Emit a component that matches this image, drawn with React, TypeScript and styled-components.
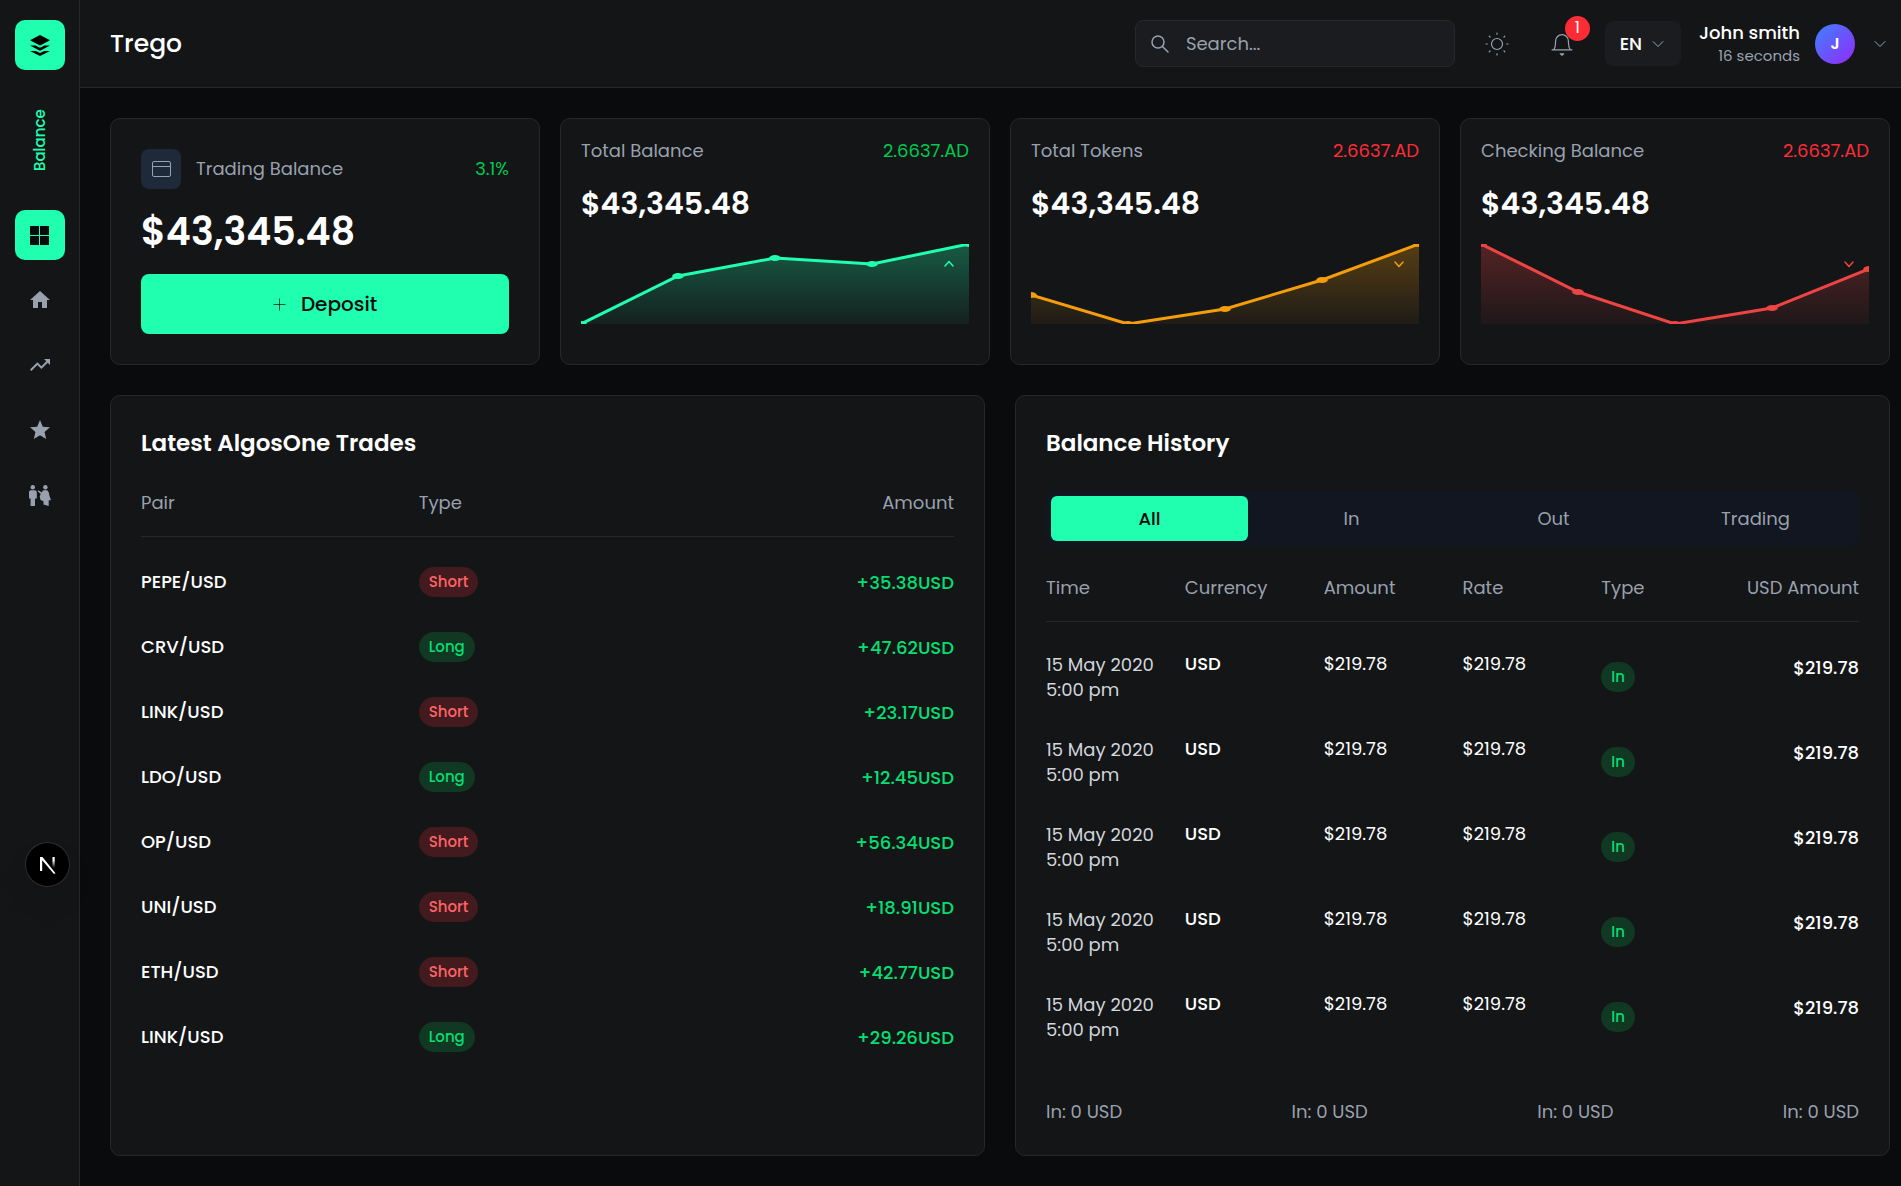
import React, { useId, useState } from "react";
import styled, { createGlobalStyle, css } from "styled-components";
import { MdHome, MdTrendingUp, MdStar } from "react-icons/md";

const GREEN = "#1fffaf";
const MUTED = "#99a1af";
const LINE = "#27282a";
const PANEL = "#141517";

const GlobalStyle = createGlobalStyle`
  *, *::before, *::after { box-sizing: border-box; }
  body {
    margin: 0;
    background: #0a0b0d;
    color: #ffffff;
    font-family: Poppins, Inter, "Noto Sans", sans-serif;
    font-size: 18px;
    line-height: 24px;
  }
  button, input, select { font: inherit; color: inherit; }
  button { border: 0; padding: 0; background: none; cursor: pointer; }
  svg { display: block; flex: none; }
`;

const Shell = styled.div`
  display: grid;
  grid-template-columns: 80px minmax(0, 1fr);
  min-height: 100vh;
`;

const Sidebar = styled.aside`
  display: flex;
  flex-direction: column;
  align-items: center;
  padding-top: 20px;
  background: ${PANEL};
  border-right: 1px solid ${LINE};
`;

const Logo = styled.a`
  display: grid;
  place-items: center;
  width: 50px;
  height: 50px;
  border-radius: 10px;
  background: ${GREEN};
  color: #000000;
`;

const SectionLabel = styled.div`
  height: 140px;
  display: flex;
  align-items: center;
  justify-content: center;
  writing-mode: vertical-rl;
  transform: rotate(180deg);
  color: ${GREEN};
  font-size: 15px;
  font-weight: 500;
`;

const Nav = styled.nav`
  display: grid;
  gap: 15px;
`;

const NavLink = styled.a<{ $active?: boolean }>`
  display: grid;
  place-items: center;
  width: 50px;
  height: 50px;
  border-radius: 10px;
  color: ${(p) => (p.$active ? "#0a0b0d" : MUTED)};
  background: ${(p) => (p.$active ? GREEN : "transparent")};
`;

const DevBadge = styled.button`
  position: fixed;
  left: 26px;
  bottom: 300px;
  display: grid;
  place-items: center;
  width: 43px;
  height: 43px;
  border-radius: 50%;
  background: #000000;
  box-shadow: 0 0 0 1px #2e2e2e, 0 16px 32px -8px rgba(0, 0, 0, 0.24);
`;

const Page = styled.div`
  display: flex;
  flex-direction: column;
`;

const Topbar = styled.header`
  display: flex;
  align-items: center;
  justify-content: space-between;
  padding: 20px 13px 20px 30px;
  background: ${PANEL};
  border-bottom: 1px solid ${LINE};
`;

const Brand = styled.h1`
  margin: 0;
  font-size: 25px;
  line-height: 35px;
  font-weight: 500;
`;

const Tools = styled.div`
  display: flex;
  align-items: center;
`;

const SearchBox = styled.label`
  display: flex;
  align-items: center;
  gap: 16px;
  width: 320px;
  height: 47px;
  margin-right: 30px;
  padding: 0 14px;
  border: 1px solid ${LINE};
  border-radius: 8px;
  background: #1b1c20;
  color: ${MUTED};
`;

const SearchInput = styled.input`
  flex: 1;
  min-width: 0;
  padding: 0;
  border: 0;
  outline: 0;
  background: none;
  &::placeholder { color: ${MUTED}; opacity: 1; }
`;

const IconButton = styled.button`
  position: relative;
  display: grid;
  place-items: center;
  width: 25px;
  height: 25px;
  margin-right: 40px;
  color: ${MUTED};
`;

const Count = styled.span`
  position: absolute;
  left: 15px;
  top: -15px;
  width: 25px;
  height: 25px;
  border-radius: 50%;
  background: #fb2c36;
  color: #ffffff;
  font-size: 16px;
`;

const LangButton = styled.button`
  display: flex;
  align-items: center;
  justify-content: center;
  gap: 8px;
  width: 76px;
  height: 45px;
  margin: 0 18px 0 -10px;
  border-radius: 8px;
  background: #1b1c20;
  font-weight: 500;
`;

const Account = styled.button`
  display: flex;
  align-items: center;
  gap: 15px;
  text-align: right;
`;

const AccountName = styled.span`
  display: block;
  font-weight: 500;
  line-height: 23px;
`;

const AccountNote = styled.span`
  display: block;
  color: ${MUTED};
  font-size: 15px;
  line-height: 23px;
`;

const Avatar = styled.span`
  display: grid;
  place-items: center;
  width: 40px;
  height: 40px;
  margin-right: 2px;
  border-radius: 50%;
  background: linear-gradient(135deg, #3c83ff, #9528fa);
  font-size: 16px;
  font-weight: 600;
`;

const Main = styled.main`
  flex: 1;
  display: flex;
  flex-direction: column;
  gap: 30px;
  padding: 30px 11px 30px 30px;
`;

const StatGrid = styled.section`
  display: grid;
  grid-template-columns: repeat(4, minmax(0, 1fr));
  gap: 20px;
`;

const PanelGrid = styled.section`
  flex: 1;
  display: grid;
  grid-template-columns: repeat(2, minmax(0, 1fr));
  gap: 30px;
`;

const Card = styled.article<{ $pad: number }>`
  padding: ${(p) => p.$pad}px;
  border: 1px solid ${LINE};
  border-radius: 10px;
  background: ${PANEL};
`;

const CardHead = styled.div`
  display: flex;
  align-items: center;
  justify-content: space-between;
  color: ${MUTED};
`;

const CardLabel = styled.div`
  display: flex;
  align-items: center;
  gap: 15px;
`;

const IconTile = styled.span`
  display: grid;
  place-items: center;
  width: 40px;
  height: 40px;
  border-radius: 8px;
  background: #1e2939;
`;

const Change = styled.span<{ $up: boolean }>`
  color: ${(p) => (p.$up ? "#00c950" : "#fb2c36")};
`;

const Figure = styled.div<{ $large?: boolean }>`
  font-weight: 600;
  ${(p) =>
    p.$large
      ? css`
          font-size: 38px;
          line-height: 45px;
          margin: 20px 0;
        `
      : css`
          font-size: 30px;
          line-height: 41px;
          margin: 20px 0;
        `}
`;

const DepositButton = styled.button`
  display: flex;
  align-items: center;
  justify-content: center;
  gap: 15px;
  width: 100%;
  height: 60px;
  border-radius: 8px;
  background: ${GREEN};
  color: #0a0b0d;
  font-size: 20px;
  font-weight: 500;
`;

const ChartBox = styled.div`
  position: relative;
  height: 80px;
`;

const ChartSvg = styled.svg`
  width: 100%;
  height: 80px;
  overflow: hidden;
`;

const ChartMark = styled.span<{ $color: string }>`
  position: absolute;
  top: 12px;
  right: 12px;
  color: ${(p) => p.$color};
`;

const PanelTitle = styled.h2`
  margin: 0 0 30px;
  font-size: 23px;
  line-height: 35px;
  font-weight: 600;
`;

const Table = styled.table`
  display: block;
`;

const Thead = styled.thead`
  display: block;
  padding-bottom: 21px;
  border-bottom: 1px solid ${LINE};
`;

const Tbody = styled.tbody`
  display: grid;
  gap: 35px;
  padding-top: 30px;
`;

const Row = styled.tr<{ $cols: number }>`
  display: grid;
  grid-template-columns: repeat(${(p) => p.$cols}, minmax(0, 1fr));
  column-gap: 20px;
`;

const Th = styled.th`
  padding: 0;
  color: ${MUTED};
  font-weight: 400;
  text-align: left;
  white-space: nowrap;
  &:last-child { text-align: right; }
`;

const Td = styled.td<{ $light?: boolean }>`
  padding: 0;
  font-weight: ${(p) => (p.$light ? 400 : 500)};
  white-space: nowrap;
`;

const DateCell = styled(Td)`
  color: #d1d5dc;
  font-weight: 400;
  line-height: 25px;
`;

const PillCell = styled(Td)`
  padding-top: 10px;
`;

const PairCell = styled(Td)`
  line-height: 30px;
`;

const AmountCell = styled(Td)<{ $gain?: boolean }>`
  height: 30px;
  line-height: 32px;
  text-align: right;
  color: ${(p) => (p.$gain ? "#05df72" : "#ffffff")};
`;

const TradeRow = styled(Row)`
  height: 30px;
`;

const Pill = styled.span<{ $up: boolean }>`
  display: block;
  width: fit-content;
  height: 30px;
  padding: 0 10px;
  border-radius: 15px;
  font-size: 15px;
  line-height: 30px;
  font-weight: 500;
  color: ${(p) => (p.$up ? "#05df72" : "#ff6467")};
  background: ${(p) => (p.$up ? "#103822" : "#431a1e")};
`;

const Tabs = styled.div`
  display: grid;
  grid-template-columns: repeat(4, minmax(0, 1fr));
  gap: 5px;
  margin-bottom: 30px;
  padding: 5px;
  border-radius: 8px;
  background: #111620;
`;

const Tab = styled.button<{ $active: boolean }>`
  height: 45px;
  border-radius: 6px;
  font-weight: ${(p) => (p.$active ? 500 : 400)};
  color: ${(p) => (p.$active ? "#0a0b0d" : MUTED)};
  background: ${(p) => (p.$active ? GREEN : "transparent")};
`;

const Totals = styled.footer`
  display: flex;
  justify-content: space-between;
  padding: 58px 0 1px;
  color: ${MUTED};
`;

type ChevronProps = { up?: boolean; size?: number; width?: number; color?: string };

const Chevron = ({ up, size = 16, width = 1, color = "currentColor" }: ChevronProps) => (
  <svg width={size} height={size} viewBox="0 0 16 16" fill="none" stroke={color} strokeWidth={width} strokeLinecap="round" strokeLinejoin="round">
    <path d={up ? "M3 10.500l5-5 5 5" : "M3 5.500l5 5 5-5"} />
  </svg>
);

const MarkIcon = ({ up }: { up: boolean }) => (
  <svg width="16" height="16" viewBox="0 0 16 16" fill="none" stroke="currentColor" strokeWidth="1.500" strokeLinecap="round" strokeLinejoin="round">
    <path d={up ? "M4 10l4-4.500 4 4.500" : "M4 6l4 4.500 4-4.500"} />
  </svg>
);

const LayersIcon = () => (
  <svg width="20" height="21" viewBox="0 0 20 21" fill="currentColor">
    <path d="M10 0L20 5.200 10 10.400 0 5.200z" />
    <path d="M0 10.500h5.500L10 12.800l4.500-2.300H20L10 15.700z" />
    <path d="M0 16h5.500L10 18.100l4.500-2.100H20L10 21z" />
  </svg>
);

const GridIcon = () => (
  <svg width="19" height="19" viewBox="0 0 19 19" fill="currentColor">
    <path d="M0 0h9v9H0zM10 0h9v9h-9zM0 10h9v9H0zM10 10h9v9h-9z" />
  </svg>
);

const PeopleIcon = () => (
  <svg width="22" height="21" viewBox="0 0 22 21" fill="currentColor">
    <circle cx="3.800" cy="2.200" r="2.200" />
    <circle cx="16.400" cy="2.200" r="2.200" />
    <path d="M1.800 5.200h4a2 2 0 0 1 2 2v6.300H6V21H1.600v-7.500H0V7.200a2 2 0 0 1 1.800-2z" />
    <path d="M9.300 5.200L12.800 7.600 14 5.200h4.300l1.500 2.300.700 3.500L22 15.200h-2.300V21l-5.200-1.500v-3.300L11.500 15l-.800-3.500 1-2.500-3-2.700z" />
  </svg>
);

const SearchIcon = () => (
  <svg width="20" height="20" viewBox="0 0 20 20" fill="none" stroke="currentColor" strokeWidth="1.500" strokeLinecap="round">
    <circle cx="8" cy="8" r="6" />
    <path d="M12.500 12.500l5.500 5.500" />
  </svg>
);

const SunIcon = () => (
  <svg width="24" height="24" viewBox="0 0 24 24" fill="none" stroke="currentColor" strokeWidth="1.200" strokeLinecap="round">
    <circle cx="12" cy="12" r="5.500" />
    <path d="M12 1v1.200M12 21.800V23M1 12h1.200M21.800 12H23M4.200 4.200l.800.800M19 19l.800.800M4.200 19.800l.800-.800M19 5l.800-.800" />
  </svg>
);

const BellIcon = () => (
  <svg width="24" height="24" viewBox="0 0 24 24" fill="none" stroke="currentColor" strokeWidth="1.200" strokeLinejoin="round" strokeLinecap="round">
    <path d="M2 17.800h20M3.800 17.500c1.400-1.500 1.700-4 1.800-8.500a6.400 6.400 0 0 1 12.800 0c.1 4.500.4 7 1.800 8.500" />
    <path d="M10.300 21.800L12 23.200l1.700-1.400z" />
  </svg>
);

const WalletIcon = () => (
  <svg width="19" height="16" viewBox="0 0 19 16" fill="none" stroke={MUTED}>
    <rect x="0.500" y="0.500" width="18" height="15" rx="1.500" />
    <path d="M0.500 5.500h18" />
  </svg>
);

const PlusIcon = () => (
  <svg width="13" height="13" viewBox="0 0 13 13" stroke="currentColor" strokeOpacity="0.700">
    <path d="M6.500 0.500v12M0.500 6.500h12" />
  </svg>
);

const NextIcon = () => {
  const id = useId();
  return (
    <svg width="16" height="18" viewBox="0 0 16 18">
      <defs>
        <linearGradient id={id} x1="0" y1="0" x2="0" y2="1">
          <stop offset="0.300" stopColor="#fff" />
          <stop offset="1" stopColor="#fff" stopOpacity="0" />
        </linearGradient>
      </defs>
      <path d="M0 1h2.500L15.500 17.200 14 18 2.200 4.200V15H0z" fill="#fff" />
      <rect x="12.500" y="1" width="2.200" height="11" fill={`url(#${id})`} />
    </svg>
  );
};

function Sparkline({ points, color }: { points: number[]; color: string }) {
  const id = useId();
  const step = 200 / (points.length - 1);
  const line = points.map((y, i) => `${i * step},${y}`).join(" ");
  return (
    <ChartSvg viewBox="0 0 200 80" preserveAspectRatio="none" aria-hidden="true">
      <defs>
        <linearGradient id={id} x1="0" y1="0" x2="0" y2="1">
          <stop offset="0" stopColor={color} stopOpacity="0.300" />
          <stop offset="1" stopColor={color} stopOpacity="0.050" />
        </linearGradient>
      </defs>
      <polygon points={`0,80 ${line} 200,80`} fill={`url(#${id})`} />
      <polyline points={line} fill="none" stroke={color} strokeWidth="3" vectorEffect="non-scaling-stroke" />
      {points.map((y, i) => (
        <circle key={i} cx={i * step} cy={y} r="3" fill={color} />
      ))}
    </ChartSvg>
  );
}

const stats = [
  { label: "Total Balance", up: true, rising: true, color: GREEN, points: [80, 32, 14, 20, 0] },
  { label: "Total Tokens", up: false, rising: false, color: "#f59e0b", points: [51, 80, 65, 36, 0] },
  { label: "Checking Balance", up: false, rising: false, color: "#ef4444", points: [0, 48, 80, 64, 25] },
];

const trades: [string, string, string][] = [
  ["PEPE/USD", "Short", "+35.38USD"],
  ["CRV/USD", "Long", "+47.62USD"],
  ["LINK/USD", "Short", "+23.17USD"],
  ["LDO/USD", "Long", "+12.45USD"],
  ["OP/USD", "Short", "+56.34USD"],
  ["UNI/USD", "Short", "+18.91USD"],
  ["ETH/USD", "Short", "+42.77USD"],
  ["LINK/USD", "Long", "+29.26USD"],
];

const history = Array.from({ length: 5 }, () => ({ day: "15 May 2020", hour: "5:00 pm", currency: "USD", value: "$219.78", type: "In" }));

export default function App() {
  const [tab, setTab] = useState("All");
  return (
    <>
      <GlobalStyle />
      <Shell>
        <Sidebar>
          <Logo href="#" aria-label="Trego home"><LayersIcon /></Logo>
          <SectionLabel>Balance</SectionLabel>
          <Nav aria-label="Main">
            <NavLink href="#dashboard" aria-label="Dashboard" $active><GridIcon /></NavLink>
            <NavLink href="#home" aria-label="Home"><MdHome size={24} /></NavLink>
            <NavLink href="#trends" aria-label="Trends"><MdTrendingUp size={24} /></NavLink>
            <NavLink href="#favourites" aria-label="Favourites"><MdStar size={24} /></NavLink>
            <NavLink href="#people" aria-label="People"><PeopleIcon /></NavLink>
          </Nav>
          <DevBadge aria-label="Developer tools"><NextIcon /></DevBadge>
        </Sidebar>
        <Page>
          <Topbar>
            <Brand>Trego</Brand>
            <Tools>
              <SearchBox>
                <SearchIcon />
                <SearchInput type="search" aria-label="Search" placeholder="Search..." />
              </SearchBox>
              <IconButton aria-label="Theme"><SunIcon /></IconButton>
              <IconButton aria-label="Notifications"><BellIcon /><Count>1</Count></IconButton>
              <LangButton>EN <Chevron color={MUTED} /></LangButton>
              <Account>
                <span>
                  <AccountName>John smith</AccountName>
                  <AccountNote>16 seconds</AccountNote>
                </span>
                <Avatar>J</Avatar>
                <Chevron color={MUTED} />
              </Account>
            </Tools>
          </Topbar>
          <Main>
            <StatGrid>
              <Card $pad={30}>
                <CardHead>
                  <CardLabel><IconTile><WalletIcon /></IconTile>Trading Balance</CardLabel>
                  <Change $up>3.1%</Change>
                </CardHead>
                <Figure $large>$43,345.48</Figure>
                <DepositButton><PlusIcon />Deposit</DepositButton>
              </Card>
              {stats.map((s) => (
                <Card key={s.label} $pad={20}>
                  <CardHead>
                    {s.label}
                    <Change $up={s.up}>2.6637.AD</Change>
                  </CardHead>
                  <Figure>$43,345.48</Figure>
                  <ChartBox>
                    <Sparkline points={s.points} color={s.color} />
                    <ChartMark $color={s.color}><MarkIcon up={s.rising} /></ChartMark>
                  </ChartBox>
                </Card>
              ))}
            </StatGrid>
            <PanelGrid>
              <Card $pad={30}>
                <PanelTitle>Latest AlgosOne Trades</PanelTitle>
                <Table>
                  <Thead>
                    <Row $cols={3}><Th>Pair</Th><Th>Type</Th><Th>Amount</Th></Row>
                  </Thead>
                  <Tbody>
                    {trades.map(([pair, type, amount]) => (
                      <TradeRow key={pair + amount} $cols={3}>
                        <PairCell>{pair}</PairCell>
                        <Td><Pill $up={type === "Long"}>{type}</Pill></Td>
                        <AmountCell $gain>{amount}</AmountCell>
                      </TradeRow>
                    ))}
                  </Tbody>
                </Table>
              </Card>
              <Card $pad={30}>
                <PanelTitle>Balance History</PanelTitle>
                <Tabs role="tablist">
                  {["All", "In", "Out", "Trading"].map((t) => (
                    <Tab key={t} role="tab" aria-selected={t === tab} $active={t === tab} onClick={() => setTab(t)}>{t}</Tab>
                  ))}
                </Tabs>
                <Table>
                  <Thead>
                    <Row $cols={6}>
                      {["Time", "Currency", "Amount", "Rate", "Type", "USD Amount"].map((h) => <Th key={h}>{h}</Th>)}
                    </Row>
                  </Thead>
                  <Tbody>
                    {history.map((h, i) => (
                      <Row key={i} $cols={6}>
                        <DateCell>{h.day}<br />{h.hour}</DateCell>
                        <Td>{h.currency}</Td>
                        <Td $light>{h.value}</Td>
                        <Td $light>{h.value}</Td>
                        <PillCell><Pill $up>{h.type}</Pill></PillCell>
                        <AmountCell>{h.value}</AmountCell>
                      </Row>
                    ))}
                  </Tbody>
                </Table>
                <Totals>
                  {[0, 1, 2, 3].map((n) => <span key={n}>In: 0 USD</span>)}
                </Totals>
              </Card>
            </PanelGrid>
          </Main>
        </Page>
      </Shell>
    </>
  );
}
